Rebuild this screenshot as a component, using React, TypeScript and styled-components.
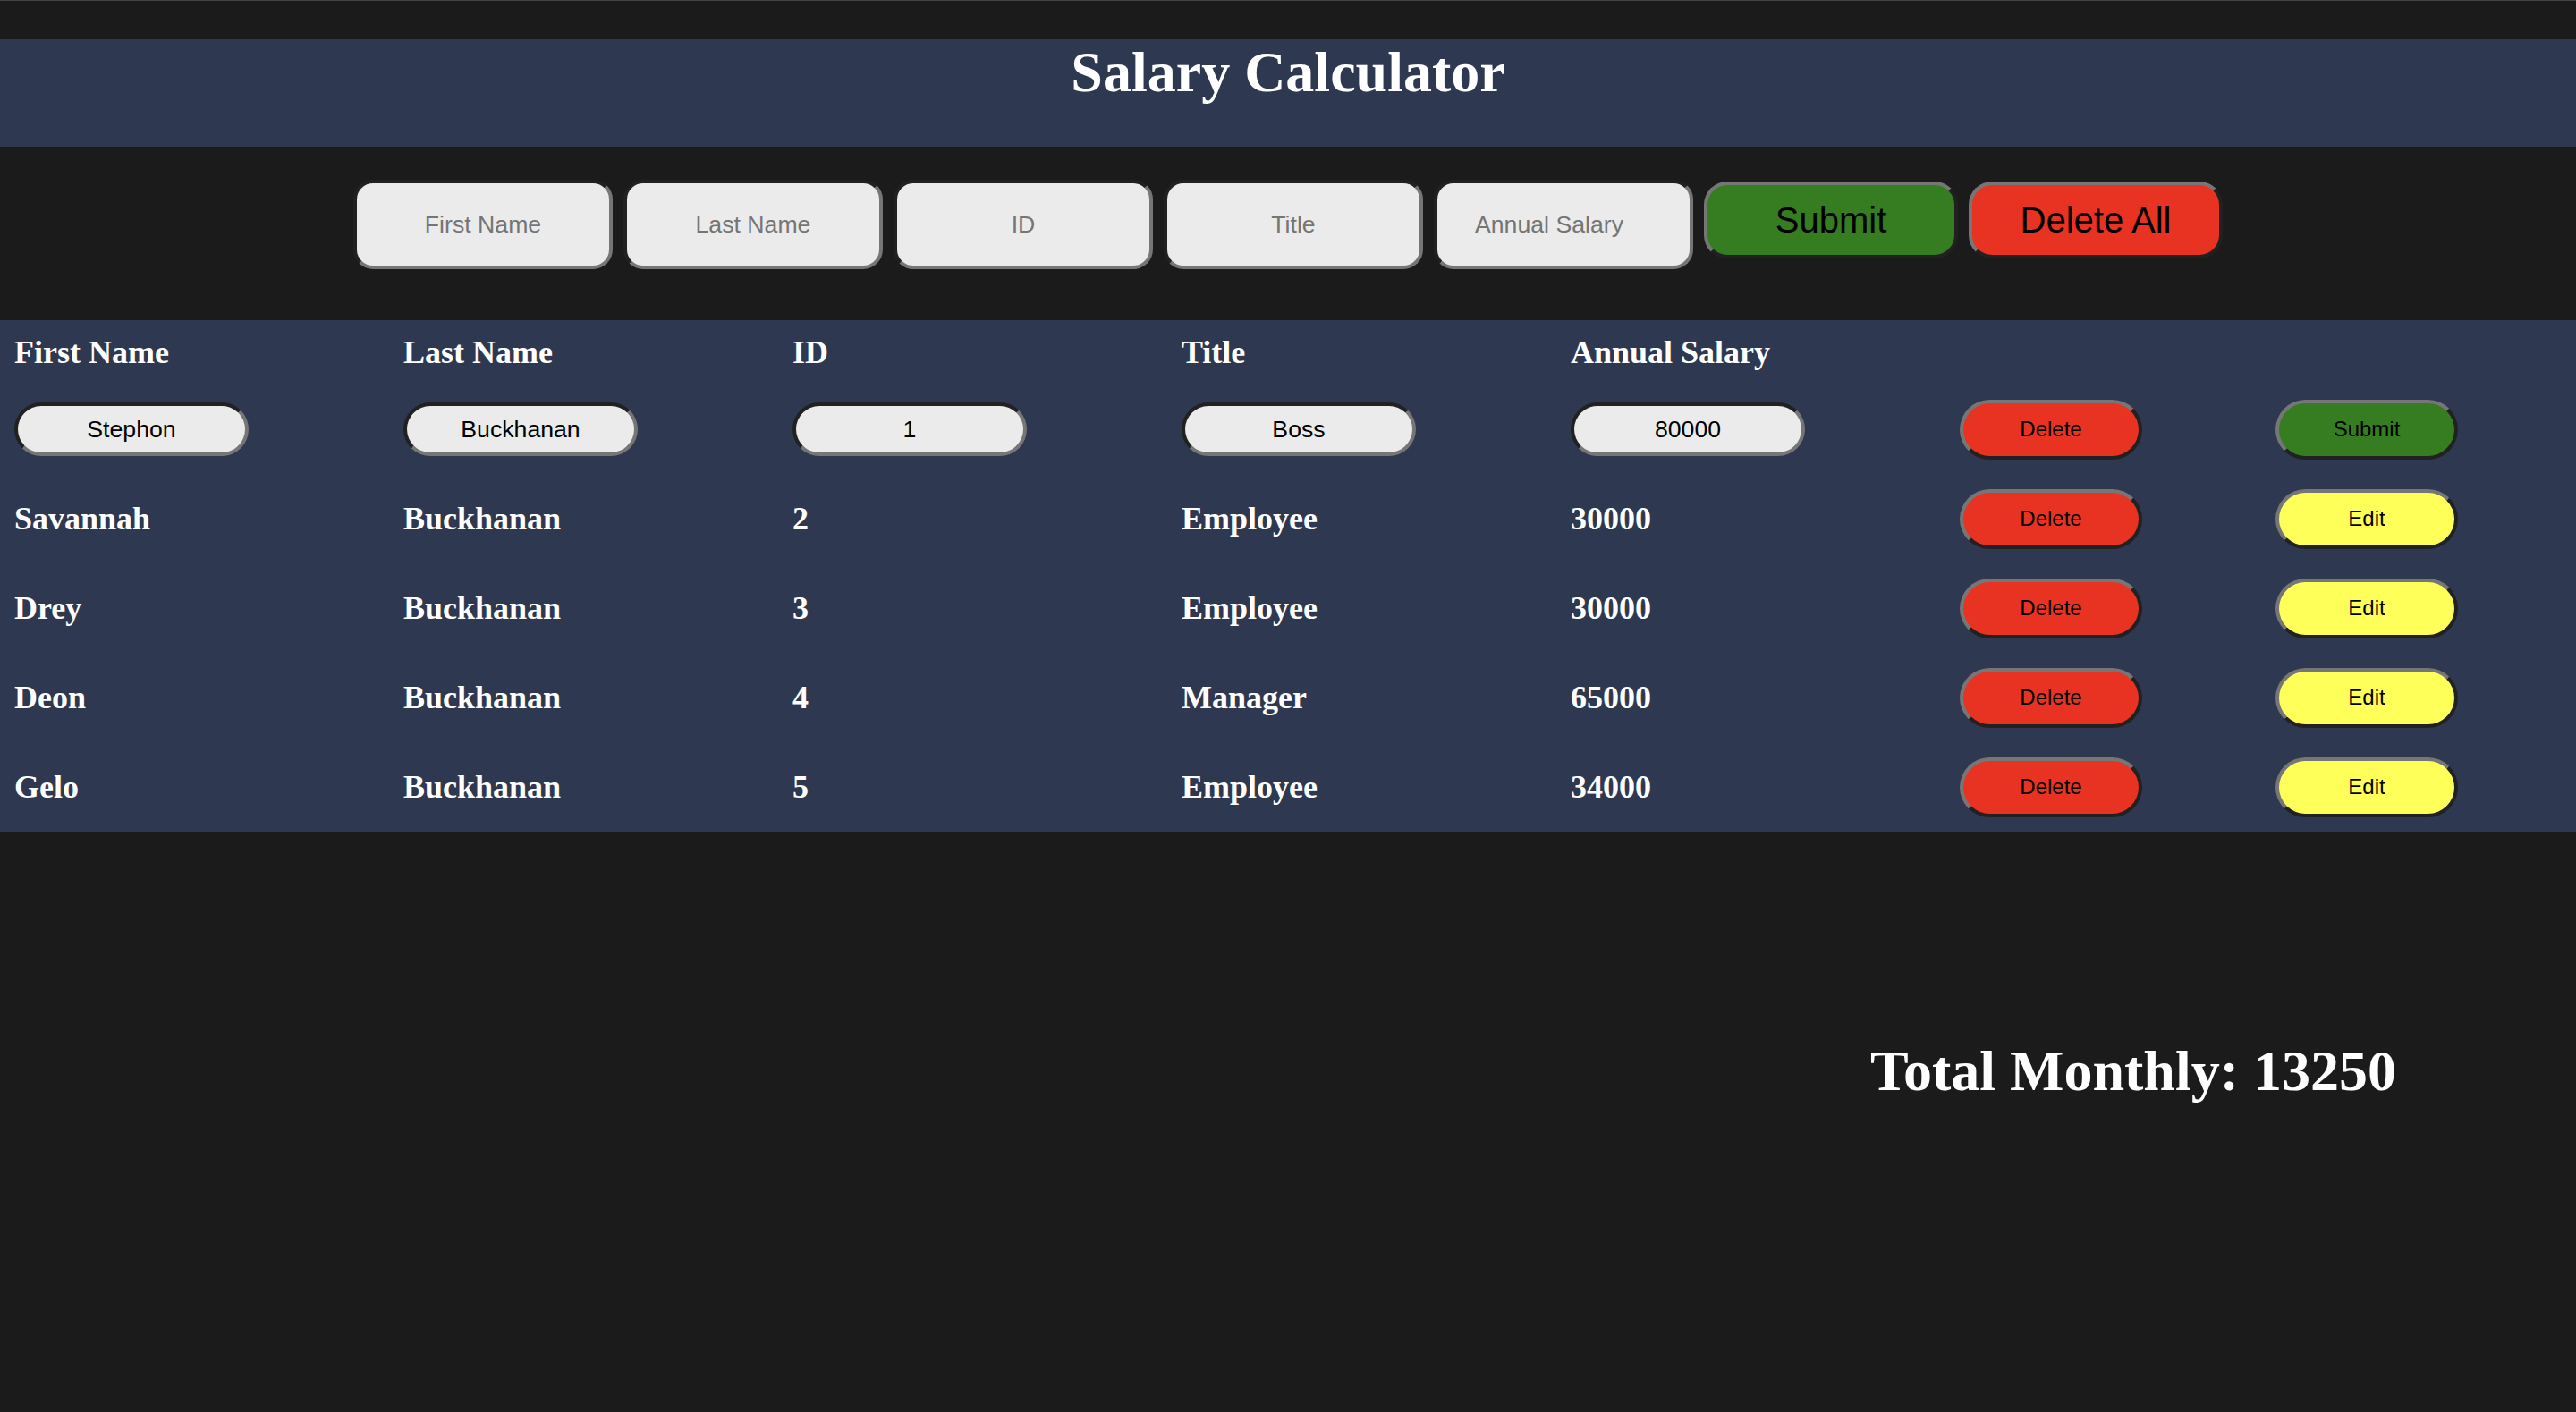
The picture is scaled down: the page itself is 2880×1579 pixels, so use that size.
import React from "react";
import styled, { createGlobalStyle } from "styled-components";

const GlobalStyle = createGlobalStyle`
  html, body {
    margin: 0;
    padding: 0;
    background: #1b1b1b;
  }
  body {
    font-family: "Liberation Serif", "Times New Roman", serif;
    color: #ffffff;
  }
`;

const Page = styled.div`
  min-height: 1579px;
  border-top: 1px solid #444444;
  background: #1b1b1b;
`;

const Header = styled.header`
  margin-top: 43px;
  height: 120px;
  background: #2e3850;
`;

const Title = styled.h1`
  margin: 0;
  font-size: 64px;
  line-height: normal;
  font-weight: 700;
  text-align: center;
  color: #ffffff;
`;

const Form = styled.form`
  display: flex;
  justify-content: center;
  align-items: baseline;
  gap: 12px;
  padding-top: 37px;
  margin-bottom: 57px;
`;

const FormInput = styled.input<{ $spin?: boolean }>`
  box-sizing: border-box;
  width: 290px;
  height: 100px;
  border: 4px inset #767676;
  border-radius: 22px;
  background: #ebebeb;
  font-family: "Liberation Sans", Arial, sans-serif;
  font-size: 26.67px;
  text-align: center;
  color: #000;
  outline: none;
  padding: 0 ${(p) => (p.$spin ? "40px" : "8px")} 0 8px;
  &::placeholder {
    color: #757575;
  }
`;

const BigButton = styled.button<{ $bg: string }>`
  box-sizing: border-box;
  width: 284px;
  height: 86px;
  border: 4px outset #767676;
  border-radius: 26px;
  background: ${(p) => p.$bg};
  font-family: "Liberation Sans", Arial, sans-serif;
  font-size: 40px;
  color: #000;
  padding: 0;
`;

const Table = styled.div`
  background: #2e3850;
  padding-left: 16px;
`;

const Row = styled.div<{ $head?: boolean }>`
  display: grid;
  grid-template-columns: repeat(5, 435px) 353px 1fr;
  align-items: center;
  height: ${(p) => (p.$head ? "72px" : "100px")};
`;

const HeadCell = styled.div`
  font-size: 36px;
  font-weight: 700;
  line-height: normal;
  color: #ffffff;
`;

const Cell = styled.div`
  font-size: 36px;
  font-weight: 700;
  line-height: normal;
  color: #ffffff;
`;

const EditInput = styled.input`
  box-sizing: border-box;
  width: 262px;
  height: 60px;
  border: 4px inset #767676;
  border-radius: 30px;
  background: #ebebeb;
  font-family: "Liberation Sans", Arial, sans-serif;
  font-size: 26.67px;
  text-align: center;
  color: #000;
  outline: none;
  padding: 0 6px;
`;

const RowButton = styled.button<{ $bg: string }>`
  box-sizing: border-box;
  width: 204px;
  height: 67px;
  border: 4px outset #767676;
  border-radius: 34px;
  background: ${(p) => p.$bg};
  font-family: "Liberation Sans", Arial, sans-serif;
  font-size: 24px;
  color: #000;
  padding: 0;
`;

const TotalWrap = styled.div`
  display: flex;
  justify-content: flex-end;
  padding-right: 201px;
  margin-top: 231px;
`;

const Total = styled.h2`
  margin: 0;
  font-size: 64px;
  font-weight: 700;
  line-height: normal;
  color: #ffffff;
`;

const RED = "#e83323";
const GREEN = "#367c21";
const YELLOW = "#ffff5a";

const employees = [
  { first: "Savannah", last: "Buckhanan", id: "2", title: "Employee", salary: "30000" },
  { first: "Drey", last: "Buckhanan", id: "3", title: "Employee", salary: "30000" },
  { first: "Deon", last: "Buckhanan", id: "4", title: "Manager", salary: "65000" },
  { first: "Gelo", last: "Buckhanan", id: "5", title: "Employee", salary: "34000" },
];

export default function App() {
  return (
    <Page>
      <GlobalStyle />
      <Header>
        <Title>Salary Calculator</Title>
      </Header>
      <Form onSubmit={(e) => e.preventDefault()}>
        <FormInput placeholder="First Name" />
        <FormInput placeholder="Last Name" />
        <FormInput placeholder="ID" />
        <FormInput placeholder="Title" />
        <FormInput placeholder="Annual Salary" $spin />
        <BigButton type="button" $bg={GREEN}>Submit</BigButton>
        <BigButton type="button" $bg={RED}>Delete All</BigButton>
      </Form>
      <Table>
        <Row $head>
          <HeadCell>First Name</HeadCell>
          <HeadCell>Last Name</HeadCell>
          <HeadCell>ID</HeadCell>
          <HeadCell>Title</HeadCell>
          <HeadCell>Annual Salary</HeadCell>
          <div />
          <div />
        </Row>
        <Row>
          <div><EditInput defaultValue="Stephon" /></div>
          <div><EditInput defaultValue="Buckhanan" /></div>
          <div><EditInput defaultValue="1" /></div>
          <div><EditInput defaultValue="Boss" /></div>
          <div><EditInput defaultValue="80000" /></div>
          <div><RowButton $bg={RED}>Delete</RowButton></div>
          <div><RowButton $bg={GREEN}>Submit</RowButton></div>
        </Row>
        {employees.map((e) => (
          <Row key={e.id}>
            <Cell>{e.first}</Cell>
            <Cell>{e.last}</Cell>
            <Cell>{e.id}</Cell>
            <Cell>{e.title}</Cell>
            <Cell>{e.salary}</Cell>
            <div><RowButton $bg={RED}>Delete</RowButton></div>
            <div><RowButton $bg={YELLOW}>Edit</RowButton></div>
          </Row>
        ))}
      </Table>
      <TotalWrap>
        <Total>Total Monthly: 13250</Total>
      </TotalWrap>
    </Page>
  );
}
